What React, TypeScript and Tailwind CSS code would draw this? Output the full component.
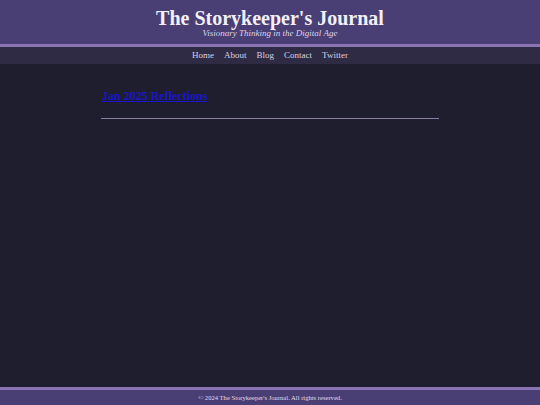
export default function App() {
  return (
    <div
      className="min-h-screen flex flex-col bg-[#1f1e2f] text-white"
      style={{ fontFamily: '"Liberation Serif", "DejaVu Serif", serif' }}
    >
      {/* Header */}
      <header className="bg-[#4a3f74] border-b-[3px] border-[#8b74b3] text-center pt-[8px] pb-[5px]">
        <h1 className="text-[20px] leading-[20px] font-bold text-[#f3f0fa]">
          The Storykeeper's Journal
        </h1>
        <p className="text-[9px] leading-[11px] italic text-[#d9d3ea]">
          Visionary Thinking in the Digital Age
        </p>
      </header>

      {/* Nav */}
      <nav className="bg-[#2f2b44] h-[17px] flex items-center justify-center gap-[10px] text-[9px] text-[#d6d1e4]">
        <a href="#">Home</a>
        <a href="#">About</a>
        <a href="#">Blog</a>
        <a href="#">Contact</a>
        <a href="#">Twitter</a>
      </nav>

      {/* Main */}
      <main className="flex-1">
        <div className="w-[338px] mx-auto pt-[23px] text-[12px] leading-[18px]">
          <a href="#" className="ml-[1px] font-bold text-[#1a16c9] underline">
            Jan 2025 Reflections
          </a>
          <hr className="mt-[13px] border-0 h-[1px] bg-[#8a7fa3]" />
        </div>
      </main>

      {/* Footer */}
      <footer className="bg-[#4a3f74] border-t-[3px] border-[#8b74b3] h-[18px] flex items-center justify-center text-[6.6px] text-[#e1dcee]">
        © 2024 The Storykeeper's Journal. All rights reserved.
      </footer>
    </div>
  )
}
